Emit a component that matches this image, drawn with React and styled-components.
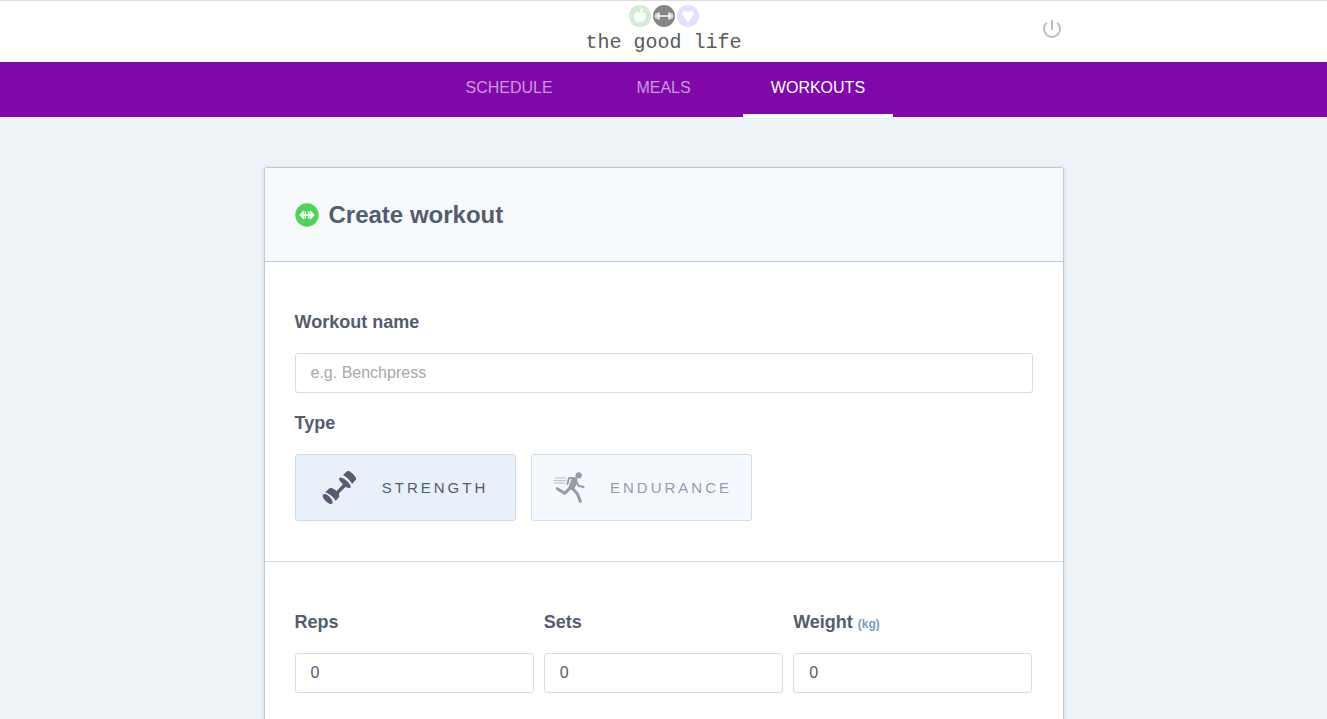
import React, { useState } from 'react';
import styled, { createGlobalStyle } from 'styled-components';
import { MdPowerSettingsNew } from 'react-icons/md';

const GlobalStyle = createGlobalStyle`
  *, *::before, *::after { box-sizing: border-box; }
  body {
    margin: 0;
    min-height: 100vh;
    background: #eef3f8;
    color: #545c6f;
    font-family: "Liberation Sans", Arial, sans-serif;
    font-size: 16px;
  }
`;

const Header = styled.header`
  background: #fff;
  border-top: 1px solid #dcdcdf;
`;

const HeaderInner = styled.div`
  display: grid;
  grid-template-columns: 1fr auto 1fr;
  align-items: center;
  max-width: 800px;
  height: 61px;
  margin: 0 auto;
  padding-bottom: 5px;
`;

const Logo = styled.a`
  grid-column: 2;
  display: flex;
  flex-direction: column;
  align-items: center;
  gap: 6px;
  color: #5a5a5a;
  font-family: "Liberation Mono", "Courier New", monospace;
  font-size: 20px;
  line-height: 20px;
  text-decoration: none;
`;

const PowerButton = styled.button`
  justify-self: end;
  display: flex;
  padding: 0;
  border: 0;
  background: none;
  color: #bdbdbd;
  font-size: 24px;
  cursor: pointer;
`;

const Nav = styled.nav`
  height: 55px;
  background: #8008aa;
  text-align: center;
`;

const Tab = styled.a`
  display: inline-block;
  width: 150px;
  height: 55px;
  border-bottom: 3px solid ${(p) => (p.$active ? '#fff' : 'transparent')};
  color: ${(p) => (p.$active ? '#fff' : '#cb98de')};
  line-height: 52px;
  text-decoration: none;
`;

const Card = styled.form`
  width: 100%;
  max-width: 800px;
  margin: 50px auto;
  border: 1px solid #bccadb;
  border-radius: 3px;
  background: #fff;
  box-shadow: 0 1px 4px rgba(60, 80, 110, 0.2);
`;

const CardHeader = styled.div`
  display: flex;
  align-items: center;
  gap: 10px;
  height: 94px;
  padding: 0 30px;
  border-bottom: 1px solid #bccadb;
  border-radius: 3px 3px 0 0;
  background: #f6fafd;
`;

const Title = styled.h1`
  margin: 0;
  font-size: 24px;
  line-height: 28px;
`;

const Section = styled.section`
  display: grid;
  gap: 20px;
  padding: 50px 30px 40px;
  & + & { border-top: 1px solid #cfdce8; }
`;

const Field = styled.div`
  min-width: 0;
`;

const Columns = styled.div`
  display: grid;
  grid-template-columns: repeat(3, 1fr);
  gap: 10px;
`;

const Label = styled.label`
  display: block;
  margin-bottom: 20px;
  font-size: 18px;
  font-weight: bold;
  line-height: 21px;
`;

const Unit = styled.span`
  color: #7c9cbf;
  font-size: 12px;
  line-height: 12px;
`;

const Input = styled.input`
  display: block;
  width: 100%;
  height: 40px;
  padding: 0 15px;
  border: 1px solid #d0deea;
  border-radius: 3px;
  background: #fff;
  color: #545c6f;
  font: inherit;
  &::placeholder { color: #a9a9a9; opacity: 1; }
`;

const TypeGroup = styled.div`
  display: flex;
  gap: 15px;
`;

const TypeButton = styled.button`
  display: flex;
  align-items: center;
  justify-content: center;
  gap: 20px;
  width: 221px;
  height: 67px;
  padding: 0;
  border: 1px solid ${(p) => (p.$active ? '#cddbe9' : '#d0dcec')};
  border-radius: 3px;
  background: ${(p) => (p.$active ? '#e8f0fa' : '#f5f9fe')};
  color: ${(p) => (p.$active ? '#545c6f' : '#959ba7')};
  font-family: inherit;
  font-size: 15px;
  letter-spacing: 3px;
  cursor: pointer;
`;

const LogoMark = () => (
  <svg width="70" height="22" viewBox="0 0 70 22" aria-hidden="true">
    <circle cx="11" cy="11" r="11" fill="#d3ecd3" />
    <path fill="#fff" d="M11 8c2-2 6-1 6 3 0 3-2 6-4 6-1 0-1-.5-2-.5S10 17 9 17c-2 0-4-3-4-6 0-4 4-5 6-3zM11 7c0-2 1-3 3-4 0 2-1 4-3 4z" />
    <circle cx="35" cy="11" r="11" fill="#868686" />
    <path fill="#fff" d="M30 10.2h10v1.6H30zM28.4 7.5h2.2v7h-2.2zM39.4 7.5h2.2v7h-2.2zM26.4 8.5h1.4v5h-1.4zM42.2 8.5h1.4v5h-1.4zM25 10.4h1v1.2h-1zM44 10.4h1v1.2h-1z" />
    <circle cx="59" cy="11" r="11" fill="#e0e0fa" />
    <path fill="#fff" d="M59 17l-5-6c-3-4 3-8 5-3 2-5 8-1 5 3z" />
  </svg>
);

const WorkoutBadge = () => (
  <svg width="24" height="24" viewBox="0 0 24 24" aria-hidden="true">
    <circle cx="12" cy="12" r="11.7" fill="#55d15b" />
    <path fill="#fff" d="M9.6 8.2H11v3h2v-3h1.4v7.6H13v-3h-2v3H9.6zM8.8 7.2v9.6L4.4 12zM15.2 7.2v9.6l4.4-4.8z" />
    <path fill="#fff" d="M8 11.2h8v1.6H8z" />
  </svg>
);

const Dumbbell = () => (
  <svg width="40" height="40" viewBox="12 5 120 120" fill="currentColor" aria-hidden="true">
    <path d="M75 26 87 15q4-3 10 1 9 6 16 17 3 5 0 8l-11 12q-3-7-11-15-8-8-16-12z" />
    <path d="M64 35q3-3 9 0 9 4 16 11 7 7 9 13 1 5-3 6-5 1-12-4L58 86l-7-7 24-25q-8-7-11-13-2-4 0-6z" />
    <path d="M22 78 32 68q3-4 9-3 11 4 19 13 6 7 4 13L53 104q-3-7-12-15-9-8-19-11z" />
    <ellipse cx="29" cy="98" rx="19" ry="9" transform="rotate(45 29 98)" />
  </svg>
);

const Runner = () => (
  <svg width="40" height="40" viewBox="6 5 120 120" fill="none" stroke="currentColor" strokeLinecap="round" strokeLinejoin="round" aria-hidden="true">
    <circle cx="92" cy="27" r="9.5" fill="currentColor" stroke="none" />
    <path fill="currentColor" stroke="none" d="M60 34q2-2 6-2l15 1q8 1 7 9-1 10-6 20l-6 10-16-3q2-11 11-30l-6-1z" />
    <path strokeWidth="6" d="m63 36-5 17M84 43l7 15 16 4" />
    <path strokeWidth="9" d="M66 65 50 81 28 67M73 66l15 16 9 23" />
    <path strokeWidth="2" d="M21 35h32M18 43h36M20 50h30" />
  </svg>
);

const types = [
  { name: 'STRENGTH', Icon: Dumbbell },
  { name: 'ENDURANCE', Icon: Runner },
];

const tabs = ['SCHEDULE', 'MEALS', 'WORKOUTS'];

export default function App() {
  const [type, setType] = useState('STRENGTH');
  return (
    <>
      <GlobalStyle />
      <Header>
        <HeaderInner>
          <Logo href="#home">
            <LogoMark />
            the good life
          </Logo>
          <PowerButton type="button" aria-label="Log out">
            <MdPowerSettingsNew />
          </PowerButton>
        </HeaderInner>
      </Header>
      <Nav>
        {tabs.map((tab) => (
          <React.Fragment key={tab}>
            <Tab href={`#${tab.toLowerCase()}`} $active={tab === 'WORKOUTS'}>{tab}</Tab>{' '}
          </React.Fragment>
        ))}
      </Nav>
      <main>
        <Card>
          <CardHeader>
            <WorkoutBadge />
            <Title>Create workout</Title>
          </CardHeader>
          <Section>
            <Field>
              <Label htmlFor="name">Workout name</Label>
              <Input id="name" placeholder="e.g. Benchpress" />
            </Field>
            <Field>
              <Label as="div" id="type">Type</Label>
              <TypeGroup role="group" aria-labelledby="type">
                {types.map(({ name, Icon }) => (
                  <TypeButton key={name} type="button" $active={name === type} aria-pressed={name === type} onClick={() => setType(name)}>
                    <Icon />
                    {name}
                  </TypeButton>
                ))}
              </TypeGroup>
            </Field>
          </Section>
          <Section>
            <Columns>
              <Field>
                <Label htmlFor="reps">Reps</Label>
                <Input id="reps" inputMode="numeric" defaultValue="0" />
              </Field>
              <Field>
                <Label htmlFor="sets">Sets</Label>
                <Input id="sets" inputMode="numeric" defaultValue="0" />
              </Field>
              <Field>
                <Label htmlFor="weight">Weight <Unit>(kg)</Unit></Label>
                <Input id="weight" inputMode="numeric" defaultValue="0" />
              </Field>
            </Columns>
          </Section>
        </Card>
      </main>
    </>
  );
}
